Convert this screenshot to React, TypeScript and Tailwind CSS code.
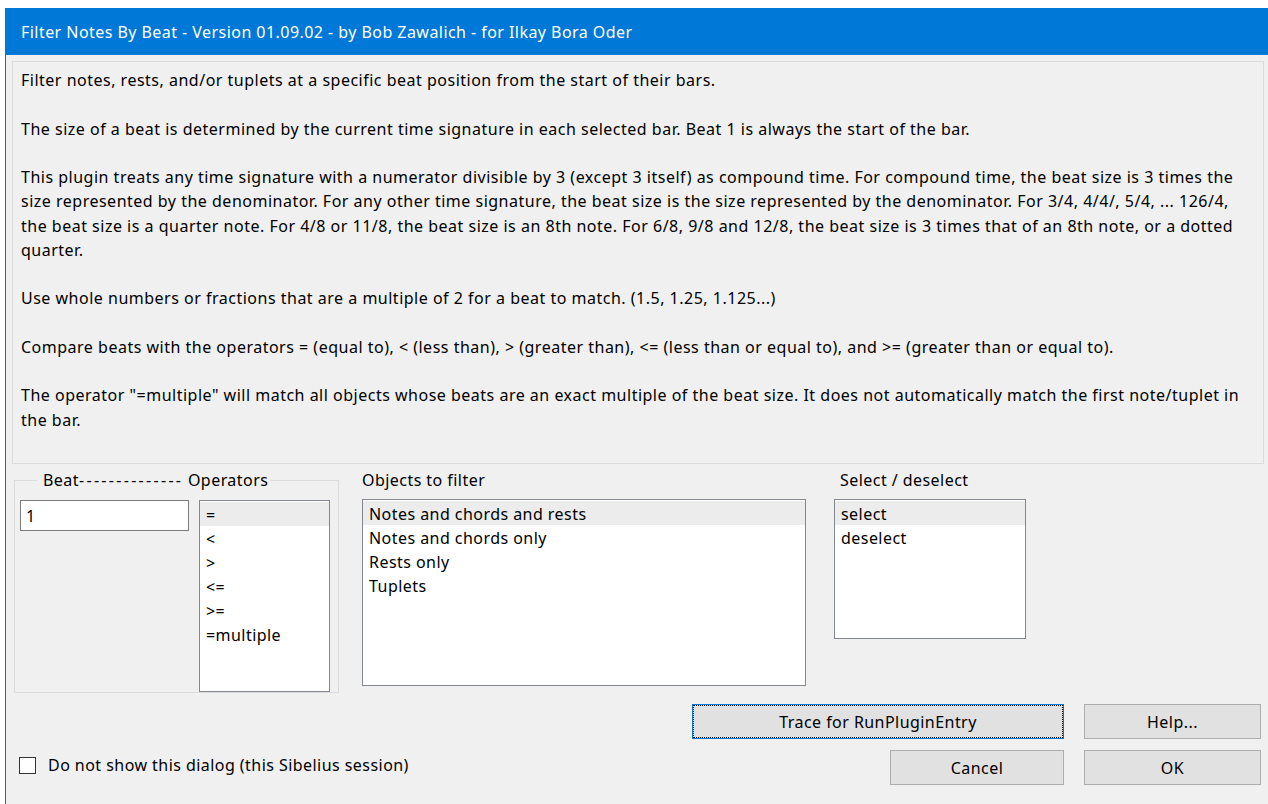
import React, { useState } from "react";

const paragraphs: string[][] = [
    ["Filter notes, rests, and/or tuplets at a specific beat position from the start of their bars."],
    ["The size of a beat is determined by the current time signature in each selected bar. Beat 1 is always the start of the bar."],
    [
        "This plugin treats any time signature with a numerator divisible by 3 (except 3 itself) as compound time. For compound time, the beat size is 3 times the",
        "size represented by the denominator. For any other time signature, the beat size is the size represented by the denominator. For 3/4, 4/4/, 5/4, ... 126/4,",
        "the beat size is a quarter note. For 4/8 or 11/8, the beat size is an 8th note. For 6/8, 9/8 and 12/8, the beat size is 3 times that of an 8th note, or a dotted",
        "quarter.",
    ],
    ["Use whole numbers or fractions that are a multiple of 2 for a beat to match. (1.5, 1.25, 1.125...)"],
    ["Compare beats with the operators = (equal to), < (less than), > (greater than), <= (less than or equal to), and >= (greater than or equal to)."],
    [
        "The operator \"=multiple\" will match all objects whose beats are an exact multiple of the beat size. It does not automatically match the first note/tuplet in",
        "the bar.",
    ],
];

const operators = ["=", "<", ">", "<=", ">=", "=multiple"];
const objectTypes = ["Notes and chords and rests", "Notes and chords only", "Rests only", "Tuplets"];
const selectModes = ["select", "deselect"];

interface ListBoxProps {
    items: string[];
    selected: number;
    onSelect: (i: number) => void;
    className: string;
}

function ListBox({ items, selected, onSelect, className }: ListBoxProps) {
    return (
        <div className={`border border-[#828790] bg-white pt-px ${className}`}>
            {items.map((item, i) => (
                <div
                    key={item}
                    onClick={() => onSelect(i)}
                    className={`h-[24px] pt-[3px] leading-[21px] pl-[6px] whitespace-nowrap cursor-default ${i === selected ? "bg-[#ececec]" : ""}`}>
                    {item}
                </div>
            ))}
        </div>
    );
}

function DialogButton({ label, width, focused }: { label: string; width: string; focused?: boolean }) {
    return (
        <button
            type="button"
            className={`${width} h-[35px] bg-[#e1e1e1] text-black border ${focused
                ? "border-[#0078d7] outline outline-1 outline-dotted outline-black -outline-offset-2"
                : "border-[#adadad]"}`}>
            {label}
        </button>
    );
}

function App() {
    const [beat, setBeat] = useState("1");
    const [op, setOp] = useState(0);
    const [objType, setObjType] = useState(0);
    const [mode, setMode] = useState(0);
    const [hideDialog, setHideDialog] = useState(false);

    return (
        <div className="min-h-screen bg-white pt-[8px] pl-[5px] overflow-hidden text-black text-[16px] tracking-[0.45px] font-['Noto_Sans',sans-serif]">
            <div className="w-[1300px] min-h-[796px] border-l border-[#0078d7] bg-[#f0f0f0]">
                {/* title bar */}
                <div className="h-[47px] bg-[#0078d7] text-white flex items-center pl-[15px] pt-[1px]">
                    Filter Notes By Beat - Version 01.09.02 - by Bob Zawalich - for Ilkay Bora Oder
                </div>

                <div className="pl-[6px] pt-[6px]">
                    {/* description */}
                    <div className="w-[1252px] h-[403px] border border-[#dcdcdc] pl-[8px] pt-[6px] leading-[24.25px] tracking-[0.5px]">
                        {paragraphs.map((lines, i) => (
                            <div key={i} className="mb-[24.25px]">
                                {lines.map((line) => (
                                    <div key={line} className="whitespace-nowrap">{line}</div>
                                ))}
                            </div>
                        ))}
                    </div>

                    {/* options */}
                    <div className="flex items-start mt-[4px]">
                        <fieldset className="ml-[2px] w-[325px] border border-[#dcdcdc] px-[5px] pt-[8px] pb-0">
                            <legend className="ml-[17px] pl-[6px] pr-[2px] leading-[24px]">
                                Beat<span className="tracking-[2.3px]">--------------</span> Operators
                            </legend>
                            <div className="flex items-start">
                                <input
                                    type="text"
                                    value={beat}
                                    onChange={(e) => setBeat(e.target.value)}
                                    className="w-[169px] h-[31px] border border-[#7a7a7a] bg-white pl-[5px] outline-none" />
                                <ListBox items={operators} selected={op} onSelect={setOp} className="ml-[10px] w-[131px] h-[192px]" />
                            </div>
                        </fieldset>

                        <div className="ml-[23px]">
                            <div className="leading-[24px]">Objects to filter</div>
                            <ListBox items={objectTypes} selected={objType} onSelect={setObjType} className="mt-[7px] w-[444px] h-[187px]" />
                        </div>

                        <div className="ml-[28px]">
                            <div className="leading-[24px] pl-[6px]">Select / deselect</div>
                            <ListBox items={selectModes} selected={mode} onSelect={setMode} className="mt-[7px] w-[192px] h-[140px]" />
                        </div>
                    </div>

                    {/* buttons */}
                    <div className="w-[1249px] flex justify-end gap-[20px] mt-[11px]">
                        <DialogButton label="Trace for RunPluginEntry" width="w-[372px]" focused />
                        <DialogButton label="Help..." width="w-[177px]" />
                    </div>

                    <div className="w-[1249px] flex items-start mt-[11px]">
                        <label className="flex items-center ml-[7px] mt-[5px] h-[20px] cursor-default">
                            <span
                                onClick={() => setHideDialog(!hideDialog)}
                                className="w-[17px] h-[17px] border border-[#333333] bg-white flex items-center justify-center text-[12px] leading-none">
                                {hideDialog ? "✓" : ""}
                            </span>
                            <span className="ml-[12px]">Do not show this dialog (this Sibelius session)</span>
                        </label>
                        <div className="flex-1 flex justify-end gap-[20px]">
                            <DialogButton label="Cancel" width="w-[174px]" />
                            <DialogButton label="OK" width="w-[177px]" />
                        </div>
                    </div>
                </div>
            </div>
        </div>
    );
}

export default App;
